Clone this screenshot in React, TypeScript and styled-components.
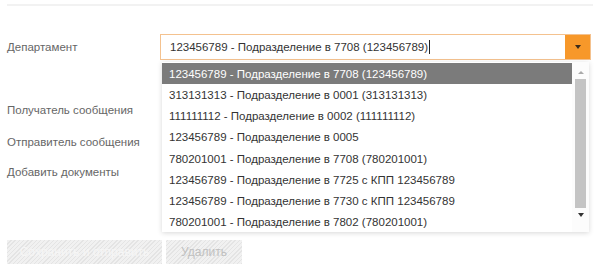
import React from "react";
import styled, { createGlobalStyle } from "styled-components";

const GlobalStyle = createGlobalStyle`
  html, body {
    margin: 0;
    padding: 0;
    background: #fff;
  }
  body {
    font-family: "Liberation Sans", Arial, sans-serif;
    font-size: 11.5px;
    color: #333;
    overflow: hidden;
  }
`;

const Page = styled.div`
  width: 600px;
  height: 264px;
  padding: 0 7px;
  box-sizing: border-box;
  overflow: hidden;
`;

const TopRule = styled.div`
  margin-top: 4px;
  height: 2px;
  background: #f2f2f2;
`;

const Row = styled.div<{ $top: number }>`
  display: grid;
  grid-template-columns: 153px 431px;
  align-items: center;
  height: 26px;
  margin-top: ${(p) => p.$top}px;
`;

const Label = styled.div`
  color: #666;
  font-size: 11.5px;
`;

const SelectWrap = styled.div`
  position: relative;
  height: 26px;
`;

const SelectBox = styled.div`
  display: flex;
  height: 26px;
  box-sizing: border-box;
  border: 1px solid #f4c28f;
  background: #fff;
`;

const SelectValue = styled.div`
  flex: 1;
  display: flex;
  align-items: center;
  padding-left: 9px;
  font-size: 11.5px;
  color: #333;
`;

const Caret = styled.span`
  display: inline-block;
  width: 1px;
  height: 14px;
  background: #222;
  margin-left: 1px;
`;

const SelectButton = styled.div`
  width: 25px;
  display: flex;
  align-items: center;
  justify-content: center;
  background: #f7982a;
`;

const Arrow = styled.span<{ $color: string }>`
  width: 0;
  height: 0;
  border-left: 3px solid transparent;
  border-right: 3px solid transparent;
  border-top: 4px solid ${(p) => p.$color};
`;

const ArrowUp = styled.span`
  width: 0;
  height: 0;
  border-left: 3px solid transparent;
  border-right: 3px solid transparent;
  border-bottom: 3px solid #aaa;
`;

const Dropdown = styled.div`
  position: absolute;
  top: 28px;
  left: 2px;
  right: 2px;
  height: 170px;
  background: #fff;
  box-shadow: 0 1px 5px rgba(0, 0, 0, 0.16);
  display: flex;
  overflow: hidden;
  z-index: 5;
`;

const Options = styled.div`
  flex: 1;
  padding-top: 1px;
`;

const Option = styled.div<{ $active?: boolean }>`
  height: 21.15px;
  line-height: 21px;
  padding-left: 7px;
  padding-top: 1px;
  box-sizing: border-box;
  font-size: 11.5px;
  white-space: nowrap;
  color: ${(p) => (p.$active ? "#fff" : "#333")};
  background: ${(p) => (p.$active ? "#7b7b7b" : "transparent")};
`;

const Scrollbar = styled.div`
  width: 17px;
  display: flex;
  flex-direction: column;
  align-items: center;
  background: #fcfcfc;
  padding: 4px 0 3px;
  box-sizing: border-box;
`;

const ScrollArrow = styled.div`
  height: 12px;
  display: flex;
  align-items: center;
  justify-content: center;
`;

const Thumb = styled.div`
  width: 11px;
  height: 129px;
  margin: 1px 0;
  background: #c4c4c4;
`;

const Buttons = styled.div`
  display: flex;
  gap: 4px;
  margin-top: 55px;
`;

const HatchButton = styled.div<{ $width: number; $text: string }>`
  width: ${(p) => p.$width}px;
  height: 24px;
  display: flex;
  align-items: center;
  justify-content: center;
  font-size: 12px;
  color: ${(p) => p.$text};
  background-color: #f1f1f1;
  background-image: repeating-linear-gradient(
    -45deg,
    #e4e4e4 0px,
    #e4e4e4 1px,
    transparent 1px,
    transparent 3px
  );
`;

const options = [
  "123456789 - Подразделение в 7708 (123456789)",
  "313131313 - Подразделение в 0001 (313131313)",
  "111111112 - Подразделение в 0002 (111111112)",
  "123456789 - Подразделение в 0005",
  "780201001 - Подразделение в 7708 (780201001)",
  "123456789 - Подразделение в 7725 с КПП 123456789",
  "123456789 - Подразделение в 7730 с КПП 123456789",
  "780201001 - Подразделение в 7802 (780201001)",
];

export default function App() {
  return (
    <>
      <GlobalStyle />
      <Page>
        <TopRule />
        <Row $top={28}>
          <Label>Департамент</Label>
          <SelectWrap>
            <SelectBox>
              <SelectValue>
                {options[0]}
                <Caret />
              </SelectValue>
              <SelectButton>
                <Arrow $color="#3a2a1a" />
              </SelectButton>
            </SelectBox>
            <Dropdown>
              <Options>
                {options.map((o, i) => (
                  <Option key={i} $active={i === 0}>
                    {o}
                  </Option>
                ))}
              </Options>
              <Scrollbar>
                <ScrollArrow>
                  <ArrowUp />
                </ScrollArrow>
                <Thumb />
                <ScrollArrow>
                  <Arrow $color="#333" />
                </ScrollArrow>
              </Scrollbar>
            </Dropdown>
          </SelectWrap>
        </Row>
        <Row $top={37}>
          <Label>Получатель сообщения</Label>
        </Row>
        <Row $top={6}>
          <Label>Отправитель сообщения</Label>
        </Row>
        <Row $top={4}>
          <Label>Добавить документы</Label>
        </Row>
        <Buttons>
          <HatchButton $width={155} $text="#f6f6f6">
            Сохранить и отправить
          </HatchButton>
          <HatchButton $width={76} $text="#c0c0c0">
            Удалить
          </HatchButton>
        </Buttons>
      </Page>
    </>
  );
}
